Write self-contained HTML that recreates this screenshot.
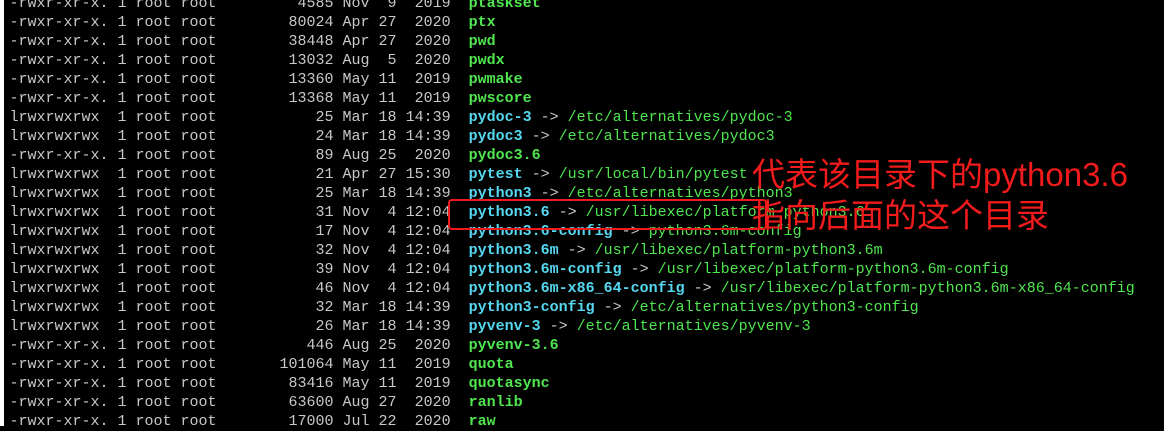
<!DOCTYPE html>
<html><head><meta charset="utf-8"><style>
html,body{margin:0;padding:0;width:1164px;height:426px;overflow:hidden;background:#000;}
#strip{position:absolute;left:0;top:0;width:4px;height:426px;background:#fff;}
pre{position:absolute;left:9.5px;top:-6px;margin:0;font-family:"Liberation Mono",monospace;font-size:15px;line-height:19px;color:#c8c8c8;}
.g{color:#4fe64f;font-weight:bold}
.c{color:#55d8f0;font-weight:bold}
.t{color:#4fe64f}
#box{position:absolute;left:448px;top:199px;width:315px;height:27px;border:2px solid #f21b1b;border-radius:4px;}
.ann{position:absolute;left:752px;font-family:"Liberation Sans","Noto Sans CJK SC",sans-serif;font-size:33px;color:#f21b1b;line-height:36px;white-space:nowrap;}
</style></head><body>
<div id="strip"></div>
<pre>-rwxr-xr-x. 1 root root         4585 Nov  9  2019  <span class="g">ptaskset</span>
-rwxr-xr-x. 1 root root        80024 Apr 27  2020  <span class="g">ptx</span>
-rwxr-xr-x. 1 root root        38448 Apr 27  2020  <span class="g">pwd</span>
-rwxr-xr-x. 1 root root        13032 Aug  5  2020  <span class="g">pwdx</span>
-rwxr-xr-x. 1 root root        13360 May 11  2019  <span class="g">pwmake</span>
-rwxr-xr-x. 1 root root        13368 May 11  2019  <span class="g">pwscore</span>
lrwxrwxrwx  1 root root           25 Mar 18 14:39  <span class="c">pydoc-3</span> -&gt; <span class="t">/etc/alternatives/pydoc-3</span>
lrwxrwxrwx  1 root root           24 Mar 18 14:39  <span class="c">pydoc3</span> -&gt; <span class="t">/etc/alternatives/pydoc3</span>
-rwxr-xr-x. 1 root root           89 Aug 25  2020  <span class="g">pydoc3.6</span>
lrwxrwxrwx  1 root root           21 Apr 27 15:30  <span class="c">pytest</span> -&gt; <span class="t">/usr/local/bin/pytest</span>
lrwxrwxrwx  1 root root           25 Mar 18 14:39  <span class="c">python3</span> -&gt; <span class="t">/etc/alternatives/python3</span>
lrwxrwxrwx  1 root root           31 Nov  4 12:04  <span class="c">python3.6</span> -&gt; <span class="t">/usr/libexec/platform-python3.6</span>
lrwxrwxrwx  1 root root           17 Nov  4 12:04  <span class="c">python3.6-config</span> -&gt; <span class="t">python3.6m-config</span>
lrwxrwxrwx  1 root root           32 Nov  4 12:04  <span class="c">python3.6m</span> -&gt; <span class="t">/usr/libexec/platform-python3.6m</span>
lrwxrwxrwx  1 root root           39 Nov  4 12:04  <span class="c">python3.6m-config</span> -&gt; <span class="t">/usr/libexec/platform-python3.6m-config</span>
lrwxrwxrwx  1 root root           46 Nov  4 12:04  <span class="c">python3.6m-x86_64-config</span> -&gt; <span class="t">/usr/libexec/platform-python3.6m-x86_64-config</span>
lrwxrwxrwx  1 root root           32 Mar 18 14:39  <span class="c">python3-config</span> -&gt; <span class="t">/etc/alternatives/python3-config</span>
lrwxrwxrwx  1 root root           26 Mar 18 14:39  <span class="c">pyvenv-3</span> -&gt; <span class="t">/etc/alternatives/pyvenv-3</span>
-rwxr-xr-x. 1 root root          446 Aug 25  2020  <span class="g">pyvenv-3.6</span>
-rwxr-xr-x. 1 root root       101064 May 11  2019  <span class="g">quota</span>
-rwxr-xr-x. 1 root root        83416 May 11  2019  <span class="g">quotasync</span>
-rwxr-xr-x. 1 root root        63600 Aug 27  2020  <span class="g">ranlib</span>
-rwxr-xr-x. 1 root root        17000 Jul 22  2020  <span class="g">raw</span></pre>
<div id="box"></div>
<div class="ann" style="top:157px">代表该目录下的python3.6</div>
<div class="ann" style="top:198px">指向后面的这个目录</div>
</body></html>
